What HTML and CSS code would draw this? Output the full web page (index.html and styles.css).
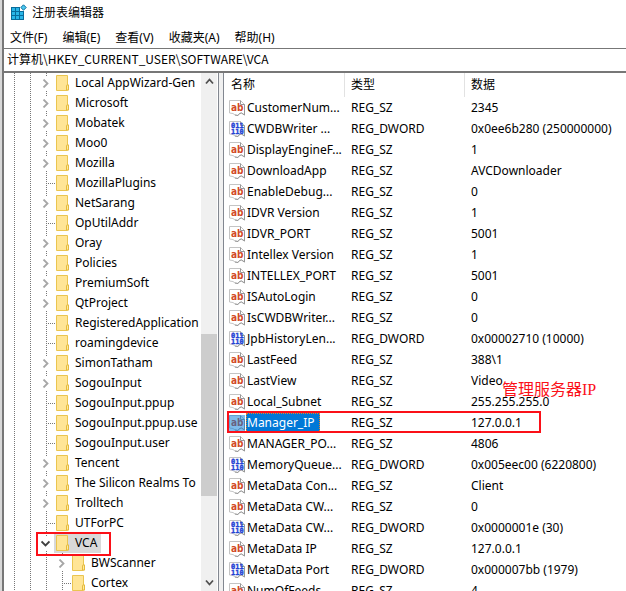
FILE: index.html
```html
<!DOCTYPE html>
<html lang="zh-CN">
<head>
<meta charset="utf-8">
<title>注册表编辑器</title>
<link rel="stylesheet" href="styles.css">
</head>
<body>
<svg class="defs" aria-hidden="true">
  <symbol id="folder" viewBox="0 0 14 16">
    <path d="M.5 .5h11v9.500h1v5h-1.500v.5H.5z" fill="#ffe596" stroke="#eac550"/>
    <path d="M10.500 15v-4.500q0-.5.500-.5h1.500v5z" fill="#ffe99f" stroke="#e5bb3c"/>
  </symbol>
  <symbol id="page" viewBox="0 0 16 16">
    <path d="M.5 13V.5h11l4 4v10.500l-3-2-2 .5-1.500 2-3-.5-2-1.500z" fill="#fff" stroke="#c4c4c4"/>
    <path d="M11.500 .5v4h4V15l-3-2-2 .5-1.500 2-3-.5" fill="none" stroke="#979797"/>
  </symbol>
  <symbol id="sz" viewBox="0 0 16 16">
    <use href="#page"/>
    <text x="2" y="11" class="glyph-ab">ab</text>
  </symbol>
  <symbol id="dword" viewBox="0 0 16 16">
    <use href="#page"/>
    <text x="2" y="7" class="glyph-bits">011</text>
    <text x="2" y="13" class="glyph-bits">110</text>
  </symbol>
  <symbol id="chev" viewBox="0 0 9 9"><path d="M2.500 .5l4 4-4 4" fill="none" stroke="#a6a6a6" stroke-width="1.800"/></symbol>
  <symbol id="down" viewBox="0 0 9 9"><path d="M.5 2.500l4 4 4-4" fill="none" stroke="#404040" stroke-width="1.900"/></symbol>
</svg>
<div class="window">
  <header class="title">
    <svg class="app-icon" viewBox="0 0 16 16" aria-hidden="true">
      <path d="M0 2h9v4h4v9H0z" fill="#086c9c"/>
      <path d="M1 3h3v3H1zM5 3h3v3H5zM1 7h3v3H1zM5 7h3v3H5zM9 7h3v3H9zM1 11h3v3H1zM5 11h3v3H5zM9 11h3v3H9z" fill="#29b6e8"/>
      <path d="M12.500 -.2l2.700 2.700-2.700 2.700-2.700-2.700z" fill="#4cc8f0" stroke="#086c9c"/>
    </svg>
    <span>注册表编辑器</span>
  </header>
  <nav class="menu">
    <button type="button">文件(F)</button>
    <button type="button">编辑(E)</button>
    <button type="button">查看(V)</button>
    <button type="button">收藏夹(A)</button>
    <button type="button">帮助(H)</button>
  </nav>
  <input class="address" aria-label="地址" value="计算机\HKEY_CURRENT_USER\SOFTWARE\VCA">
  <main class="panes">
    <section class="tree-pane">
      <ul class="tree">
        <li class="open"><svg class="arrow"><use href="#chev"/></svg><svg class="folder"><use href="#folder"/></svg><span>Local AppWizard-Gen</span></li>
        <li class="open"><svg class="arrow"><use href="#chev"/></svg><svg class="folder"><use href="#folder"/></svg><span>Microsoft</span></li>
        <li class="open"><svg class="arrow"><use href="#chev"/></svg><svg class="folder"><use href="#folder"/></svg><span>Mobatek</span></li>
        <li class="open"><svg class="arrow"><use href="#chev"/></svg><svg class="folder"><use href="#folder"/></svg><span>Moo0</span></li>
        <li class="open"><svg class="arrow"><use href="#chev"/></svg><svg class="folder"><use href="#folder"/></svg><span>Mozilla</span></li>
        <li class="leaf"><i class="arrow"></i><svg class="folder"><use href="#folder"/></svg><span>MozillaPlugins</span></li>
        <li class="open"><svg class="arrow"><use href="#chev"/></svg><svg class="folder"><use href="#folder"/></svg><span>NetSarang</span></li>
        <li class="leaf"><i class="arrow"></i><svg class="folder"><use href="#folder"/></svg><span>OpUtilAddr</span></li>
        <li class="open"><svg class="arrow"><use href="#chev"/></svg><svg class="folder"><use href="#folder"/></svg><span>Oray</span></li>
        <li class="open"><svg class="arrow"><use href="#chev"/></svg><svg class="folder"><use href="#folder"/></svg><span>Policies</span></li>
        <li class="open"><svg class="arrow"><use href="#chev"/></svg><svg class="folder"><use href="#folder"/></svg><span>PremiumSoft</span></li>
        <li class="open"><svg class="arrow"><use href="#chev"/></svg><svg class="folder"><use href="#folder"/></svg><span>QtProject</span></li>
        <li class="leaf"><i class="arrow"></i><svg class="folder"><use href="#folder"/></svg><span>RegisteredApplication</span></li>
        <li class="leaf"><i class="arrow"></i><svg class="folder"><use href="#folder"/></svg><span>roamingdevice</span></li>
        <li class="open"><svg class="arrow"><use href="#chev"/></svg><svg class="folder"><use href="#folder"/></svg><span>SimonTatham</span></li>
        <li class="open"><svg class="arrow"><use href="#chev"/></svg><svg class="folder"><use href="#folder"/></svg><span>SogouInput</span></li>
        <li class="leaf"><i class="arrow"></i><svg class="folder"><use href="#folder"/></svg><span>SogouInput.ppup</span></li>
        <li class="leaf"><i class="arrow"></i><svg class="folder"><use href="#folder"/></svg><span>SogouInput.ppup.use</span></li>
        <li class="leaf"><i class="arrow"></i><svg class="folder"><use href="#folder"/></svg><span>SogouInput.user</span></li>
        <li class="open"><svg class="arrow"><use href="#chev"/></svg><svg class="folder"><use href="#folder"/></svg><span>Tencent</span></li>
        <li class="open"><svg class="arrow"><use href="#chev"/></svg><svg class="folder"><use href="#folder"/></svg><span>The Silicon Realms To</span></li>
        <li class="open"><svg class="arrow"><use href="#chev"/></svg><svg class="folder"><use href="#folder"/></svg><span>Trolltech</span></li>
        <li class="leaf"><i class="arrow"></i><svg class="folder"><use href="#folder"/></svg><span>UTForPC</span></li>
        <li class="open current"><svg class="arrow"><use href="#down"/></svg><svg class="folder"><use href="#folder"/></svg><span>VCA</span><b class="mark"></b></li>
        <li class="open child"><svg class="arrow"><use href="#chev"/></svg><svg class="folder"><use href="#folder"/></svg><span>BWScanner</span></li>
        <li class="leaf child"><i class="arrow"></i><svg class="folder"><use href="#folder"/></svg><span>Cortex</span></li>
      </ul>
      <div class="scroll">
        <svg class="tip" viewBox="0 0 9 9"><path d="M1 6.500l3.500-4 3.500 4" fill="none" stroke="#505050" stroke-width="1.800"/></svg>
        <div class="track"><div class="thumb"></div></div>
        <svg class="tip" viewBox="0 0 9 9"><path d="M1 2.500l3.500 4 3.500-4" fill="none" stroke="#505050" stroke-width="1.800"/></svg>
      </div>
    </section>
    <section class="list-pane">
      <table>
        <thead><tr><th class="name">名称</th><th class="type">类型</th><th>数据</th></tr></thead>
        <tbody>
          <tr><td><svg><use href="#sz"/></svg><span>CustomerNum...</span></td><td>REG_SZ</td><td>2345</td></tr>
          <tr><td><svg><use href="#dword"/></svg><span>CWDBWriter ...</span></td><td>REG_DWORD</td><td>0x0ee6b280 (250000000)</td></tr>
          <tr><td><svg><use href="#sz"/></svg><span>DisplayEngineF...</span></td><td>REG_SZ</td><td>1</td></tr>
          <tr><td><svg><use href="#sz"/></svg><span>DownloadApp</span></td><td>REG_SZ</td><td>AVCDownloader</td></tr>
          <tr><td><svg><use href="#sz"/></svg><span>EnableDebug...</span></td><td>REG_SZ</td><td>0</td></tr>
          <tr><td><svg><use href="#sz"/></svg><span>IDVR Version</span></td><td>REG_SZ</td><td>1</td></tr>
          <tr><td><svg><use href="#sz"/></svg><span>IDVR_PORT</span></td><td>REG_SZ</td><td>5001</td></tr>
          <tr><td><svg><use href="#sz"/></svg><span>Intellex Version</span></td><td>REG_SZ</td><td>1</td></tr>
          <tr><td><svg><use href="#sz"/></svg><span>INTELLEX_PORT</span></td><td>REG_SZ</td><td>5001</td></tr>
          <tr><td><svg><use href="#sz"/></svg><span>ISAutoLogin</span></td><td>REG_SZ</td><td>0</td></tr>
          <tr><td><svg><use href="#sz"/></svg><span>IsCWDBWriter...</span></td><td>REG_SZ</td><td>0</td></tr>
          <tr><td><svg><use href="#dword"/></svg><span>JpbHistoryLen...</span></td><td>REG_DWORD</td><td>0x00002710 (10000)</td></tr>
          <tr><td><svg><use href="#sz"/></svg><span>LastFeed</span></td><td>REG_SZ</td><td>388\1</td></tr>
          <tr><td><svg><use href="#sz"/></svg><span>LastView</span></td><td>REG_SZ</td><td>Video</td></tr>
          <tr><td><svg><use href="#sz"/></svg><span>Local_Subnet</span></td><td>REG_SZ</td><td>255.255.255.0</td></tr>
          <tr class="picked"><td><svg><use href="#sz"/><rect width="16" height="16" fill="#0078d7" opacity=".5"/></svg><span>Manager_IP</span><b class="mark"></b><em class="note">管理服务器<span>IP</span></em></td><td>REG_SZ</td><td>127.0.0.1</td></tr>
          <tr><td><svg><use href="#sz"/></svg><span>MANAGER_PO...</span></td><td>REG_SZ</td><td>4806</td></tr>
          <tr><td><svg><use href="#dword"/></svg><span>MemoryQueue...</span></td><td>REG_DWORD</td><td>0x005eec00 (6220800)</td></tr>
          <tr><td><svg><use href="#sz"/></svg><span>MetaData Con...</span></td><td>REG_SZ</td><td>Client</td></tr>
          <tr><td><svg><use href="#sz"/></svg><span>MetaData CW...</span></td><td>REG_SZ</td><td>0</td></tr>
          <tr><td><svg><use href="#dword"/></svg><span>MetaData CW...</span></td><td>REG_DWORD</td><td>0x0000001e (30)</td></tr>
          <tr><td><svg><use href="#sz"/></svg><span>MetaData IP</span></td><td>REG_SZ</td><td>127.0.0.1</td></tr>
          <tr><td><svg><use href="#dword"/></svg><span>MetaData Port</span></td><td>REG_DWORD</td><td>0x000007bb (1979)</td></tr>
          <tr><td><svg><use href="#sz"/></svg><span>NumOfFeeds</span></td><td>REG_SZ</td><td>4</td></tr>
        </tbody>
      </table>
    </section>
  </main>
</div>
</body>
</html>
```
FILE: styles.css
```css
* { box-sizing: border-box; }
body {
  margin: 0;
  background: #d8d8d8;
  color: #000;
  font: 12px/20px "Noto Sans", "Noto Sans CJK SC", sans-serif;
}
button, input { font: inherit; color: inherit; }
.defs { display: none; }
.glyph-ab { font: bold 10px "DejaVu Sans Condensed", "DejaVu Sans", sans-serif; fill: #d24a26; }
.glyph-bits { font: bold 7px "DejaVu Sans Mono", monospace; fill: #2443d4; stroke: #2443d4; stroke-width: 0.4px; }
.window {
  display: flex;
  flex-direction: column;
  height: 100vh;
  margin-left: 2px;
  border-left: 2px solid #777;
  background: #fff;
  overflow: hidden;
}
.title {
  display: flex;
  align-items: center;
  gap: 5px;
  flex: none;
  height: 26px;
  padding-left: 7px;
}
.app-icon { width: 16px; height: 16px; overflow: visible; }
.menu {
  display: flex;
  flex: none;
  gap: 15px;
  height: 22px;
  padding: 1px 0 0 6px;
}
.menu button { padding: 0; border: 0; background: none; }
.address {
  flex: none;
  width: 100%;
  height: 25px;
  padding: 0 3px 3px;
  border: solid #777;
  border-width: 1px 0 2px;
  border-radius: 0;
  background: #fff;
  font-family: "Noto Sans CJK SC", sans-serif;
  outline: 0;
}
.panes { display: flex; flex: 1; min-height: 0; background: #f0f0f0; }

.tree-pane {
  display: flex;
  flex: none;
  width: 215px;
  padding-right: 1px;
  border-right: 1px solid #828790;
  background: #fff;
}
.tree {
  flex: 1;
  min-width: 0;
  margin: 0;
  padding: 0;
  list-style: none;
  overflow: hidden;
}
.tree li {
  position: relative;
  display: flex;
  align-items: center;
  height: 20px;
  padding-left: 37px;
  white-space: nowrap;
  background:
    repeating-linear-gradient(#777 0 1px, transparent 1px 2px) 10px 0 / 1px 100% no-repeat,
    repeating-linear-gradient(#777 0 1px, transparent 1px 2px) 26px 0 / 1px 100% no-repeat,
    repeating-linear-gradient(#777 0 1px, transparent 1px 2px) 42px 0 / 1px 100% no-repeat;
}
.tree .child { padding-left: 53px; }
.tree .child::before {
  content: "";
  position: absolute;
  left: 58px;
  top: 0;
  width: 1px;
  height: 20px;
  background: repeating-linear-gradient(#777 0 1px, transparent 1px 2px);
}
.arrow { position: relative; flex: none; width: 9px; height: 9px; margin-right: 6px; }
.open .arrow { background: #fff; outline: 3px solid #fff; }
.leaf .arrow::after {
  content: "";
  position: absolute;
  left: 7px;
  top: 4px;
  width: 7px;
  height: 1px;
  background: repeating-linear-gradient(90deg, #777 0 1px, transparent 1px 2px);
}
.folder { position: relative; flex: none; width: 14px; height: 16px; }
.tree li > span { position: relative; padding: 0 4px 0 5px; }
.current .folder { background: #d9d9d9; box-shadow: 0 0 0 2px #d9d9d9; }
.current > span { background: #d9d9d9; }
.mark { position: absolute; border: 2px solid #fb1018; }
.current .mark { left: 32px; top: -1px; width: 75px; height: 24px; z-index: 1; }

.scroll {
  display: flex;
  flex-direction: column;
  align-items: center;
  flex: none;
  width: 16px;
  background: #f0f0f0;
}
.tip { flex: none; width: 9px; height: 9px; margin: 4px 0; }
.track { flex: 1; width: 100%; padding-top: 244px; }
.thumb { height: 162px; background: #cdcdcd; }

.list-pane {
  flex: 1;
  min-width: 0;
  margin-left: 4px;
  border-left: 1px solid #828790;
  background: #fff;
  overflow: hidden;
}
table { width: 100%; border-spacing: 0; table-layout: fixed; }
th, td { padding: 0 0 0 6px; text-align: left; font-weight: 400; white-space: nowrap; }
th { height: 24px; border-right: 1px solid #e2e2e2; }
th:last-child { border-right: 0; }
.name { width: 121px; padding-left: 7px; }
.type { width: 120px; }
td { height: 21px; }
td:first-child {
  position: relative;
  display: flex;
  align-items: center;
  padding-left: 5px;
}
td svg { flex: none; width: 16px; height: 16px; margin-right: 1px; }
td > span { padding: 0 5px 0 1px; }
.picked td > span { background: #0078d7; color: #fff; outline: 1px dotted #e08030; outline-offset: -1px; }
.picked .mark { left: 3px; top: -1px; width: 314px; height: 22px; }
.note {
  position: absolute;
  left: 278px;
  top: -36px;
  color: #fb1018;
  font: 16px/24px "Noto Sans CJK SC", sans-serif;
}
.note span { font-family: "Liberation Serif", serif; }
```
